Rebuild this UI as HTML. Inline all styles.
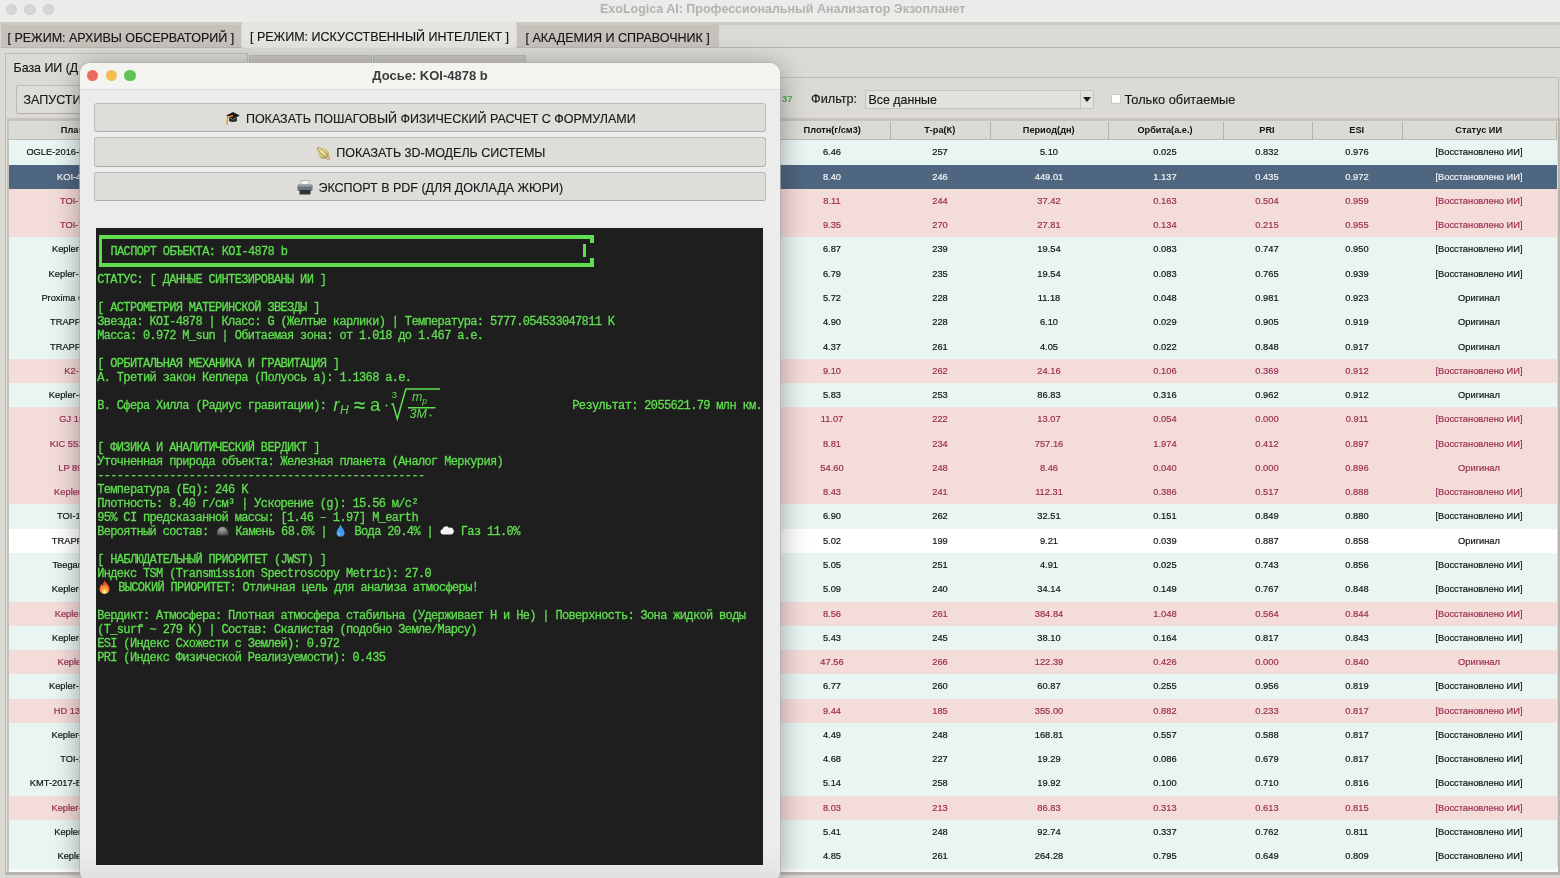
<!DOCTYPE html>
<html><head><meta charset="utf-8">
<style>
*{margin:0;padding:0;box-sizing:border-box}
html,body{width:1560px;height:878px;overflow:hidden;background:#dcdad5;font-family:"Liberation Sans",sans-serif}
body{position:relative}
.a{position:absolute}
#titlebar{left:0;top:0;width:1560px;height:22px;background:#ebebe9}
.tl{width:11.4px;height:11.4px;border-radius:50%;background:#d6d6d4;border:0.6px solid #cdcdcb;top:3.7px}
#title{left:2.7px;width:1560px;top:3px;line-height:13px;text-align:center;font-size:12.5px;font-weight:bold;color:#b3b2af}
.tab{top:24.5px;height:22.5px;font-size:12.5px;color:#151515;-webkit-text-stroke:0.15px #151515;line-height:27px;white-space:nowrap}
.stab{top:55px;height:22px}
.hd{position:absolute;top:121.5px;height:18px;padding-right:1.6px;background:#dcdad5;border-right:1.4px solid #b5b2ac;border-bottom:1px solid #bdbab4;font-size:9.2px;font-weight:bold;color:#111;text-align:center;line-height:17.5px;white-space:nowrap}
.row{position:absolute;left:9px;width:1548px;height:24.4px;font-size:9.3px;color:#141414;-webkit-text-stroke:0.2px currentColor}
.row span{position:absolute;top:0;width:200px;line-height:24.3px;text-align:center;white-space:nowrap}
.c{background:#e8f5f3}
.p{background:#f4dcd9;color:#9b2d53}
.s{background:#4f6681;color:#f2f4f6}
.w{background:#ffffff}
.btn{left:93.6px;width:672.4px;height:29.3px;background:#dfddd9;border:1px solid #bdbbb6;border-bottom-color:#aeaca7;border-radius:3px;font-size:12.5px;color:#1a1a1a;text-align:center;line-height:28.5px;white-space:nowrap}
.btn{-webkit-text-stroke:0.15px #1a1a1a}
#term{left:16.4px;top:165px;width:666.4px;height:637.3px;background:#1e1e1e;overflow:hidden}
.t{position:absolute;left:1px;font-family:"Liberation Mono",monospace;font-size:12px;letter-spacing:-0.655px;-webkit-text-stroke:0.3px #5fde4f;color:#5fde4f;white-space:pre;line-height:14px}
</style></head><body><div id="wrap" style="position:absolute;left:0;top:0;width:1560px;height:878px;overflow:hidden;will-change:transform">
<div id="titlebar" class="a"></div>
<div class="a tl" style="left:5.6px"></div>
<div class="a tl" style="left:24.3px"></div>
<div class="a tl" style="left:43px"></div>
<div id="title" class="a">ExoLogica AI: Профессиональный Анализатор Экзопланет</div>
<div class="a" style="left:0;top:22px;width:1560px;height:2.5px;background:#cbc9c4"></div>
<div class="a" style="left:0;top:47px;width:1560px;height:1px;background:#b9b6b0"></div>
<div class="a" style="left:242px;top:46px;width:274px;height:3px;background:#dcdad5"></div>
<div class="a tab" style="left:1px;width:240px;background:#c6c2bb;padding-left:6.5px">[ РЕЖИМ: АРХИВЫ ОБСЕРВАТОРИЙ ]</div>
<div class="a tab" style="left:242px;width:274px;top:22px;height:25.5px;background:#e6e4e0;padding-left:8px;line-height:31px">[ РЕЖИМ: ИСКУССТВЕННЫЙ ИНТЕЛЛЕКТ ]</div>
<div class="a tab" style="left:517px;width:202px;background:#c6c2bb;padding-left:8.5px">[ АКАДЕМИЯ И СПРАВОЧНИК ]</div>

<!-- sub tabs -->
<div class="a" style="left:5px;top:77px;width:1554px;height:797px;border:1px solid #bfbcb6;background:#dcdad5"></div>
<div class="a stab" style="left:5px;top:53px;width:243px;height:25px;background:#dcdad5;border:1px solid #bfbcb6;border-bottom:none;font-size:12.4px;line-height:29.5px;padding-left:7.5px;color:#151515;-webkit-text-stroke:0.15px #151515">База ИИ (Д</div>
<div class="a stab" style="left:249px;width:123px;background:#c9c6c0;border:1px solid #bcb9b3;border-bottom:none"></div>
<div class="a stab" style="left:373px;width:153px;background:#c9c6c0;border:1px solid #bcb9b3;border-bottom:none"></div>

<!-- control row -->
<div class="a" style="left:16px;top:84.5px;width:200px;height:29.3px;background:#dfddd9;border:1px solid #bdbbb6;border-bottom-color:#aeaca7;border-radius:2.5px;font-size:12.5px;line-height:29px;padding-left:6.5px;color:#1a1a1a;-webkit-text-stroke:0.15px #1a1a1a">ЗАПУСТИТЬ</div>
<div class="a" style="left:782px;top:93px;font-size:9.5px;font-weight:bold;color:#4caf50">37</div>
<div class="a" style="left:811px;top:92.2px;font-size:12.7px;color:#1a1a1a;-webkit-text-stroke:0.15px #1a1a1a">Фильтр:</div>
<div class="a" style="left:865px;top:89.5px;width:229px;height:19px;background:#e4e2de;border:1px solid #c6c3be;font-size:12.4px;line-height:19px;padding-left:2.5px;color:#151515;-webkit-text-stroke:0.15px #151515">Все данные</div>
<div class="a" style="left:1080px;top:89.5px;width:14px;height:19px;border:1px solid #c6c3be;background:#e4e2de"></div>
<div class="a" style="left:1083px;top:97px;width:0;height:0;border-left:4px solid transparent;border-right:4px solid transparent;border-top:5px solid #1a1a1a"></div>
<div class="a" style="left:1111px;top:94px;width:10px;height:10px;background:#fff;border:1px solid #c9c7c2;border-radius:2px"></div>
<div class="a" style="left:1124.5px;top:91.8px;font-size:12.8px;color:#1a1a1a;-webkit-text-stroke:0.15px #1a1a1a">Только обитаемые</div>

<!-- table -->
<div class="a" style="left:7px;top:118px;width:1551px;height:754px;background:#dcdad5;border-top:3.5px solid #c6c3bd;border-left:2px solid #c6c3bd"></div>
<div class="a" style="left:9px;top:866px;width:1549px;height:6px;background:#fbfbfb"></div>
<div class="hd" style="left:9.0px;width:144.0px">Планета</div>
<div class="hd" style="left:153.0px;width:623.0px"></div>
<div class="hd" style="left:776.0px;width:115.0px">Плотн(г/см3)</div>
<div class="hd" style="left:891.0px;width:100.0px">Т-ра(К)</div>
<div class="hd" style="left:991.0px;width:118.0px">Период(дн)</div>
<div class="hd" style="left:1109.0px;width:114.5px">Орбита(а.е.)</div>
<div class="hd" style="left:1223.5px;width:89.5px">PRI</div>
<div class="hd" style="left:1313.0px;width:90.0px">ESI</div>
<div class="hd" style="left:1403.0px;width:154.0px">Статус ИИ</div>
<div class="row c" style="top:140.30px"><span style="left:17.4px;text-align:left">OGLE-2016-BLG-1195L b</span><span style="left:723.0px">6.46</span><span style="left:831.0px">257</span><span style="left:940.0px">5.10</span><span style="left:1056.0px">0.025</span><span style="left:1158.0px">0.832</span><span style="left:1248.0px">0.976</span><span style="left:1370.0px">[Восстановлено ИИ]</span></div>
<div class="row s" style="top:164.58px"><span style="left:48.0px;text-align:left">KOI-4878 b</span><span style="left:723.0px">8.40</span><span style="left:831.0px">246</span><span style="left:940.0px">449.01</span><span style="left:1056.0px">1.137</span><span style="left:1158.0px">0.435</span><span style="left:1248.0px">0.972</span><span style="left:1370.0px">[Восстановлено ИИ]</span></div>
<div class="row p" style="top:188.85px"><span style="left:51.0px;text-align:left">TOI-700 d</span><span style="left:723.0px">8.11</span><span style="left:831.0px">244</span><span style="left:940.0px">37.42</span><span style="left:1056.0px">0.163</span><span style="left:1158.0px">0.504</span><span style="left:1248.0px">0.959</span><span style="left:1370.0px">[Восстановлено ИИ]</span></div>
<div class="row p" style="top:213.12px"><span style="left:51.0px;text-align:left">TOI-700 e</span><span style="left:723.0px">9.35</span><span style="left:831.0px">270</span><span style="left:940.0px">27.81</span><span style="left:1056.0px">0.134</span><span style="left:1158.0px">0.215</span><span style="left:1248.0px">0.955</span><span style="left:1370.0px">[Восстановлено ИИ]</span></div>
<div class="row c" style="top:237.40px"><span style="left:43.0px;text-align:left">Kepler-442 b</span><span style="left:723.0px">6.87</span><span style="left:831.0px">239</span><span style="left:940.0px">19.54</span><span style="left:1056.0px">0.083</span><span style="left:1158.0px">0.747</span><span style="left:1248.0px">0.950</span><span style="left:1370.0px">[Восстановлено ИИ]</span></div>
<div class="row c" style="top:261.68px"><span style="left:39.6px;text-align:left">Kepler-1229 b</span><span style="left:723.0px">6.79</span><span style="left:831.0px">235</span><span style="left:940.0px">19.54</span><span style="left:1056.0px">0.083</span><span style="left:1158.0px">0.765</span><span style="left:1248.0px">0.939</span><span style="left:1370.0px">[Восстановлено ИИ]</span></div>
<div class="row c" style="top:285.95px"><span style="left:32.4px;text-align:left">Proxima Cen b</span><span style="left:723.0px">5.72</span><span style="left:831.0px">228</span><span style="left:940.0px">11.18</span><span style="left:1056.0px">0.048</span><span style="left:1158.0px">0.981</span><span style="left:1248.0px">0.923</span><span style="left:1370.0px">Оригинал</span></div>
<div class="row c" style="top:310.23px"><span style="left:41.0px;text-align:left">TRAPPIST-1 e</span><span style="left:723.0px">4.90</span><span style="left:831.0px">228</span><span style="left:940.0px">6.10</span><span style="left:1056.0px">0.029</span><span style="left:1158.0px">0.905</span><span style="left:1248.0px">0.919</span><span style="left:1370.0px">Оригинал</span></div>
<div class="row c" style="top:334.50px"><span style="left:41.0px;text-align:left">TRAPPIST-1 f</span><span style="left:723.0px">4.37</span><span style="left:831.0px">261</span><span style="left:940.0px">4.05</span><span style="left:1056.0px">0.022</span><span style="left:1158.0px">0.848</span><span style="left:1248.0px">0.917</span><span style="left:1370.0px">Оригинал</span></div>
<div class="row p" style="top:358.77px"><span style="left:55.3px;text-align:left">K2-72 e</span><span style="left:723.0px">9.10</span><span style="left:831.0px">262</span><span style="left:940.0px">24.16</span><span style="left:1056.0px">0.106</span><span style="left:1158.0px">0.369</span><span style="left:1248.0px">0.912</span><span style="left:1370.0px">[Восстановлено ИИ]</span></div>
<div class="row c" style="top:383.05px"><span style="left:39.8px;text-align:left">Kepler-62 f</span><span style="left:723.0px">5.83</span><span style="left:831.0px">253</span><span style="left:940.0px">86.83</span><span style="left:1056.0px">0.316</span><span style="left:1158.0px">0.962</span><span style="left:1248.0px">0.912</span><span style="left:1370.0px">Оригинал</span></div>
<div class="row p" style="top:407.32px"><span style="left:50.2px;text-align:left">GJ 1002 b</span><span style="left:723.0px">11.07</span><span style="left:831.0px">222</span><span style="left:940.0px">13.07</span><span style="left:1056.0px">0.054</span><span style="left:1158.0px">0.000</span><span style="left:1248.0px">0.911</span><span style="left:1370.0px">[Восстановлено ИИ]</span></div>
<div class="row p" style="top:431.60px"><span style="left:40.7px;text-align:left">KIC 5522786 b</span><span style="left:723.0px">8.81</span><span style="left:831.0px">234</span><span style="left:940.0px">757.16</span><span style="left:1056.0px">1.974</span><span style="left:1158.0px">0.412</span><span style="left:1248.0px">0.897</span><span style="left:1370.0px">[Восстановлено ИИ]</span></div>
<div class="row p" style="top:455.88px"><span style="left:49.3px;text-align:left">LP 890-9 c</span><span style="left:723.0px">54.60</span><span style="left:831.0px">248</span><span style="left:940.0px">8.46</span><span style="left:1056.0px">0.040</span><span style="left:1158.0px">0.000</span><span style="left:1248.0px">0.896</span><span style="left:1370.0px">Оригинал</span></div>
<div class="row p" style="top:480.15px"><span style="left:45.1px;text-align:left">Kepler-452 b</span><span style="left:723.0px">8.43</span><span style="left:831.0px">241</span><span style="left:940.0px">112.31</span><span style="left:1056.0px">0.386</span><span style="left:1158.0px">0.517</span><span style="left:1248.0px">0.888</span><span style="left:1370.0px">[Восстановлено ИИ]</span></div>
<div class="row c" style="top:504.43px"><span style="left:48.1px;text-align:left">TOI-1452 b</span><span style="left:723.0px">6.90</span><span style="left:831.0px">262</span><span style="left:940.0px">32.51</span><span style="left:1056.0px">0.151</span><span style="left:1158.0px">0.849</span><span style="left:1248.0px">0.880</span><span style="left:1370.0px">[Восстановлено ИИ]</span></div>
<div class="row w" style="top:528.70px"><span style="left:42.8px;text-align:left">TRAPPIST-1 d</span><span style="left:723.0px">5.02</span><span style="left:831.0px">199</span><span style="left:940.0px">9.21</span><span style="left:1056.0px">0.039</span><span style="left:1158.0px">0.887</span><span style="left:1248.0px">0.858</span><span style="left:1370.0px">Оригинал</span></div>
<div class="row c" style="top:552.97px"><span style="left:43.4px;text-align:left">Teegarden b</span><span style="left:723.0px">5.05</span><span style="left:831.0px">251</span><span style="left:940.0px">4.91</span><span style="left:1056.0px">0.025</span><span style="left:1158.0px">0.743</span><span style="left:1248.0px">0.856</span><span style="left:1370.0px">[Восстановлено ИИ]</span></div>
<div class="row c" style="top:577.25px"><span style="left:42.8px;text-align:left">Kepler-22 b</span><span style="left:723.0px">5.09</span><span style="left:831.0px">240</span><span style="left:940.0px">34.14</span><span style="left:1056.0px">0.149</span><span style="left:1158.0px">0.767</span><span style="left:1248.0px">0.848</span><span style="left:1370.0px">[Восстановлено ИИ]</span></div>
<div class="row p" style="top:601.52px"><span style="left:45.7px;text-align:left">Kepler-69 c</span><span style="left:723.0px">8.56</span><span style="left:831.0px">261</span><span style="left:940.0px">384.84</span><span style="left:1056.0px">1.048</span><span style="left:1158.0px">0.564</span><span style="left:1248.0px">0.844</span><span style="left:1370.0px">[Восстановлено ИИ]</span></div>
<div class="row c" style="top:625.80px"><span style="left:43.0px;text-align:left">Kepler-1649 c</span><span style="left:723.0px">5.43</span><span style="left:831.0px">245</span><span style="left:940.0px">38.10</span><span style="left:1056.0px">0.164</span><span style="left:1158.0px">0.817</span><span style="left:1248.0px">0.843</span><span style="left:1370.0px">[Восстановлено ИИ]</span></div>
<div class="row p" style="top:650.08px"><span style="left:48.5px;text-align:left">Kepler-61 b</span><span style="left:723.0px">47.56</span><span style="left:831.0px">266</span><span style="left:940.0px">122.39</span><span style="left:1056.0px">0.426</span><span style="left:1158.0px">0.000</span><span style="left:1248.0px">0.840</span><span style="left:1370.0px">Оригинал</span></div>
<div class="row c" style="top:674.35px"><span style="left:40.0px;text-align:left">Kepler-296 e</span><span style="left:723.0px">6.77</span><span style="left:831.0px">260</span><span style="left:940.0px">60.87</span><span style="left:1056.0px">0.255</span><span style="left:1158.0px">0.956</span><span style="left:1248.0px">0.819</span><span style="left:1370.0px">[Восстановлено ИИ]</span></div>
<div class="row p" style="top:698.62px"><span style="left:44.8px;text-align:left">HD 136352 c</span><span style="left:723.0px">9.44</span><span style="left:831.0px">185</span><span style="left:940.0px">355.00</span><span style="left:1056.0px">0.882</span><span style="left:1158.0px">0.233</span><span style="left:1248.0px">0.817</span><span style="left:1370.0px">[Восстановлено ИИ]</span></div>
<div class="row c" style="top:722.90px"><span style="left:42.5px;text-align:left">Kepler-186 f</span><span style="left:723.0px">4.49</span><span style="left:831.0px">248</span><span style="left:940.0px">168.81</span><span style="left:1056.0px">0.557</span><span style="left:1158.0px">0.588</span><span style="left:1248.0px">0.817</span><span style="left:1370.0px">[Восстановлено ИИ]</span></div>
<div class="row c" style="top:747.17px"><span style="left:51.2px;text-align:left">TOI-237 b</span><span style="left:723.0px">4.68</span><span style="left:831.0px">227</span><span style="left:940.0px">19.29</span><span style="left:1056.0px">0.086</span><span style="left:1158.0px">0.679</span><span style="left:1248.0px">0.817</span><span style="left:1370.0px">[Восстановлено ИИ]</span></div>
<div class="row c" style="top:771.45px"><span style="left:20.8px;text-align:left">KMT-2017-BLG-0165 b</span><span style="left:723.0px">5.14</span><span style="left:831.0px">258</span><span style="left:940.0px">19.92</span><span style="left:1056.0px">0.100</span><span style="left:1158.0px">0.710</span><span style="left:1248.0px">0.816</span><span style="left:1370.0px">[Восстановлено ИИ]</span></div>
<div class="row p" style="top:795.72px"><span style="left:42.5px;text-align:left">Kepler-174 d</span><span style="left:723.0px">8.03</span><span style="left:831.0px">213</span><span style="left:940.0px">86.83</span><span style="left:1056.0px">0.313</span><span style="left:1158.0px">0.613</span><span style="left:1248.0px">0.815</span><span style="left:1370.0px">[Восстановлено ИИ]</span></div>
<div class="row c" style="top:820.00px"><span style="left:45.2px;text-align:left">Kepler-441 b</span><span style="left:723.0px">5.41</span><span style="left:831.0px">248</span><span style="left:940.0px">92.74</span><span style="left:1056.0px">0.337</span><span style="left:1158.0px">0.762</span><span style="left:1248.0px">0.811</span><span style="left:1370.0px">[Восстановлено ИИ]</span></div>
<div class="row c" style="top:844.27px"><span style="left:48.5px;text-align:left">Kepler-440 b</span><span style="left:723.0px">4.85</span><span style="left:831.0px">261</span><span style="left:940.0px">264.28</span><span style="left:1056.0px">0.795</span><span style="left:1158.0px">0.649</span><span style="left:1248.0px">0.809</span><span style="left:1370.0px">[Восстановлено ИИ]</span></div>
<div class="a" style="left:5px;top:871.8px;width:1555px;height:7px;background:#d8d6d1;border-top:3px solid #b8b5af"></div>
<div class="a" style="left:1557.5px;top:118px;width:2.5px;height:757px;background:#b8b5af"></div>

<!-- dialog shadow -->
<div class="a" style="left:80px;top:63px;width:700px;height:819px;border-radius:10px;box-shadow:0 0 0 0.7px #b0b0b0,0 4px 28px rgba(0,0,0,0.36)"></div>
<!-- dialog -->
<div class="a" style="left:80px;top:63px;width:700px;height:819px;border-radius:10px;background:linear-gradient(#ececec 0,#ececec 96%,#e0e0e0 100%);overflow:hidden">
  <div class="a" style="left:0;top:0;width:700px;height:27px;background:#f3f3ef;border-bottom:1px solid #dcdcd8"></div>
</div>
<div class="a" style="left:86.9px;top:70.1px;width:11.4px;height:11.4px;border-radius:50%;background:#ee6a5e"></div>
<div class="a" style="left:105.6px;top:70.1px;width:11.4px;height:11.4px;border-radius:50%;background:#f3bd4f"></div>
<div class="a" style="left:124.3px;top:70.1px;width:11.4px;height:11.4px;border-radius:50%;background:#5ec454"></div>
<div class="a" style="left:80px;width:700px;top:68px;text-align:center;font-size:13px;font-weight:bold;color:#3b3b3b">Досье: KOI-4878 b</div>
<div class="a btn" style="top:103.2px;padding-left:1px;line-height:30px"><svg width="15" height="15" viewBox="0 0 15 15" style="vertical-align:-3px;margin-right:6px"><path d="M8 1 L14.8 4.6 L8 8.2 L1.2 4.6Z" fill="#1d1d1d"/><path d="M4 6.5 V10 Q8 12.2 12 10 V6.5 L8 8.6Z" fill="#2e2e2e"/><path d="M8 4.6 L2.6 6 L2 12.5" fill="none" stroke="#e59a1c" stroke-width="1.3"/><path d="M1.2 11.5 L2 14.5 L3 11.5Z" fill="#e59a1c"/></svg>ПОКАЗАТЬ ПОШАГОВЫЙ ФИЗИЧЕСКИЙ РАСЧЕТ С ФОРМУЛАМИ</div>
<div class="a btn" style="top:137.4px;padding-left:1px;line-height:30px"><svg width="16" height="16" viewBox="0 0 16 16" style="vertical-align:-4px;margin-right:5px"><defs><radialGradient id="pg" cx="0.4" cy="0.35" r="0.7"><stop offset="0" stop-color="#f3f0c0"/><stop offset="0.6" stop-color="#d6cf88"/><stop offset="1" stop-color="#8e8a50"/></radialGradient></defs><circle cx="8.5" cy="8.5" r="5.3" fill="url(#pg)"/><ellipse cx="8.5" cy="8.5" rx="8.2" ry="1.9" transform="rotate(45 8.5 8.5)" fill="none" stroke="#c09a50" stroke-width="1.1"/><path d="M4.8 4.6 A5.3 5.3 0 0 1 12.6 5.2" fill="none" stroke="#d8ce90" stroke-width="0.8"/></svg>ПОКАЗАТЬ 3D-МОДЕЛЬ СИСТЕМЫ</div>
<div class="a btn" style="top:171.9px;padding-left:1px;line-height:30px"><svg width="16" height="15" viewBox="0 0 16 15" style="vertical-align:-3px;margin-right:5px"><rect x="4" y="0.5" width="8" height="5" fill="#f4f4f4" stroke="#9a9a9a" stroke-width="0.6"/><rect x="0.5" y="4.5" width="15" height="6.5" rx="1.6" fill="#6d737b"/><rect x="0.5" y="4.5" width="15" height="2" rx="1" fill="#9aa0a7"/><rect x="2.5" y="10" width="11" height="4.5" fill="#2f3338"/></svg>ЭКСПОРТ В PDF (ДЛЯ ДОКЛАДА ЖЮРИ)</div>
<div class="a" style="left:96.4px;top:228px;width:666.4px;height:637.3px;background:#1e1e1e"></div>
<div class="t" style="top:273.40px;left:97.20px">СТАТУС: [ ДАННЫЕ СИНТЕЗИРОВАНЫ ИИ ]</div>
<div class="t" style="top:301.40px;left:97.20px">[ АСТРОМЕТРИЯ МАТЕРИНСКОЙ ЗВЕЗДЫ ]</div>
<div class="t" style="top:315.40px;left:97.20px">Звезда: KOI-4878 | Класс: G (Желтые карлики) | Температура: 5777.054533047811 K</div>
<div class="t" style="top:329.40px;left:97.20px">Масса: 0.972 M_sun | Обитаемая зона: от 1.018 до 1.467 а.е.</div>
<div class="t" style="top:357.40px;left:97.20px">[ ОРБИТАЛЬНАЯ МЕХАНИКА И ГРАВИТАЦИЯ ]</div>
<div class="t" style="top:371.40px;left:97.20px">A. Третий закон Кеплера (Полуось a): 1.1368 а.е.</div>
<div class="t" style="top:399.40px;left:97.20px">B. Сфера Хилла (Радиус гравитации):</div>
<div class="t" style="top:399.40px;left:572.30px">Результат: 2055621.79 млн км.</div>
<div class="t" style="top:441.40px;left:97.20px">[ ФИЗИКА И АНАЛИТИЧЕСКИЙ ВЕРДИКТ ]</div>
<div class="t" style="top:455.40px;left:97.20px">Уточненная природа объекта: Железная планета (Аналог Меркурия)</div>
<div class="t" style="top:469.40px;left:97.20px">--------------------------------------------------</div>
<div class="t" style="top:483.40px;left:97.20px">Температура (Eq): 246 K</div>
<div class="t" style="top:497.40px;left:97.20px">Плотность: 8.40 г/см³ | Ускорение (g): 15.56 м/с²</div>
<div class="t" style="top:511.40px;left:97.20px">95% CI предсказанной массы: [1.46 – 1.97] M_earth</div>
<div class="t" style="top:525.40px;left:97.20px">Вероятный состав:</div>
<div class="t" style="top:525.40px;left:235.30px">Камень 68.6% |</div>
<div class="t" style="top:525.40px;left:354.50px">Вода 20.4% |</div>
<div class="t" style="top:525.40px;left:460.80px">Газ 11.0%</div>
<div class="t" style="top:553.40px;left:97.20px">[ НАБЛЮДАТЕЛЬНЫЙ ПРИОРИТЕТ (JWST) ]</div>
<div class="t" style="top:567.40px;left:97.20px">Индекс TSM (Transmission Spectroscopy Metric): 27.0</div>
<div class="t" style="top:581.40px;left:118.20px">ВЫСОКИЙ ПРИОРИТЕТ: Отличная цель для анализа атмосферы!</div>
<div class="t" style="top:609.40px;left:97.20px">Вердикт: Атмосфера: Плотная атмосфера стабильна (Удерживает H и He) | Поверхность: Зона жидкой воды</div>
<div class="t" style="top:623.40px;left:97.20px">(T_surf ~ 279 K) | Состав: Скалистая (подобно Земле/Марсу)</div>
<div class="t" style="top:637.40px;left:97.20px">ESI (Индекс Схожести с Землей): 0.972</div>
<div class="t" style="top:651.40px;left:97.20px">PRI (Индекс Физической Реализуемости): 0.435</div>
<div class="t" style="top:245.40px;left:110.50px">ПАСПОРТ ОБЪЕКТА: KOI-4878 b</div>
<div class="a" style="left:99.0px;top:235.3px;width:494.8px;height:3.7px;background:#5fde4f"></div>
<div class="a" style="left:99.0px;top:263.2px;width:494.8px;height:3.8px;background:#5fde4f"></div>
<div class="a" style="left:99.2px;top:235.3px;width:2.9px;height:31.8px;background:#5fde4f"></div>
<div class="a" style="left:590.1px;top:235.3px;width:3.7px;height:7.6px;background:#5fde4f"></div>
<div class="a" style="left:590.1px;top:257.7px;width:3.7px;height:9.4px;background:#5fde4f"></div>
<div class="a" style="left:582.7px;top:243.8px;width:3.4px;height:13.1px;background:#5fde4f"></div>
<svg class="a" style="left:325px;top:380px" width="120" height="45" viewBox="0 0 120 45">
<g fill="#5fde4f" font-family="Liberation Sans" font-style="italic">
<text x="8.3" y="30.8" font-size="19">r</text>
<text x="15" y="33.8" font-size="12">H</text>
<text x="29.2" y="32" font-size="20" font-style="normal" stroke="#5fde4f" stroke-width="0.4">≈</text>
<text x="45" y="31" font-size="18.5" font-style="normal">a</text>
<circle cx="61.5" cy="25.4" r="1"/>
<text x="66.8" y="18" font-size="9.5" font-style="normal">3</text>
<path d="M66.5 24.5 L68 23.8 L72.3 39 L80.8 9 L115 9" fill="none" stroke="#5fde4f" stroke-width="1.5"/>
<text x="87" y="20.8" font-size="12.5">m</text>
<text x="97.3" y="23.5" font-size="8.5">p</text>
<rect x="83" y="27" width="27.4" height="1.5"/>
<text x="84.5" y="37.7" font-size="12.5">3M</text>
<circle cx="105.5" cy="35.5" r="1"/>
</g></svg>
<svg class="a" style="left:215.5px;top:525.8px" width="13" height="10" viewBox="0 0 13 10"><defs><radialGradient id="rg" cx="0.45" cy="0.3" r="0.75"><stop offset="0" stop-color="#a8a8a8"/><stop offset="0.6" stop-color="#6e6e6e"/><stop offset="1" stop-color="#3e3e3e"/></radialGradient></defs><path d="M1 9.5 C0.3 7 1.2 3.5 3.5 1.8 C5.5 0.3 8.5 0.5 10.3 2.5 C12.3 4.6 12.8 7.5 12 9.5 Z" fill="url(#rg)"/></svg>
<svg class="a" style="left:336px;top:523.5px" width="9" height="13" viewBox="0 0 9 13"><path d="M4.5 0.5 C6 4 8.5 6 8.5 8.8 A4 4 0 0 1 0.5 8.8 C0.5 6 3 4 4.5 0.5Z" fill="#3f9be8"/><path d="M2.6 8.5 A2 2 0 0 0 4 11" fill="none" stroke="#bfe3ff" stroke-width="0.9"/></svg>
<svg class="a" style="left:440px;top:525px" width="14" height="10" viewBox="0 0 14 10"><path d="M3 9.5 A2.8 2.8 0 0 1 2.6 4 A3.5 3.5 0 0 1 8.8 2.8 A3 3 0 0 1 11.5 9.5 Z" fill="#f4f4f4"/></svg>
<svg class="a" style="left:99px;top:579.5px" width="11" height="14" viewBox="0 0 11 14"><defs><radialGradient id="fg" cx="0.5" cy="0.85" r="0.7"><stop offset="0" stop-color="#fff6b0"/><stop offset="0.35" stop-color="#ffb040"/><stop offset="1" stop-color="#e8401c"/></radialGradient></defs><path d="M5.5 0.5 C7 3 10.5 5 10.5 9 A5 5 0 0 1 0.5 9 C0.5 6.5 2 5 2.5 3.5 C3 5 3.5 5.5 4 5.5 C4 3.5 4.5 2 5.5 0.5Z" fill="url(#fg)"/></svg>
</div></body></html>
